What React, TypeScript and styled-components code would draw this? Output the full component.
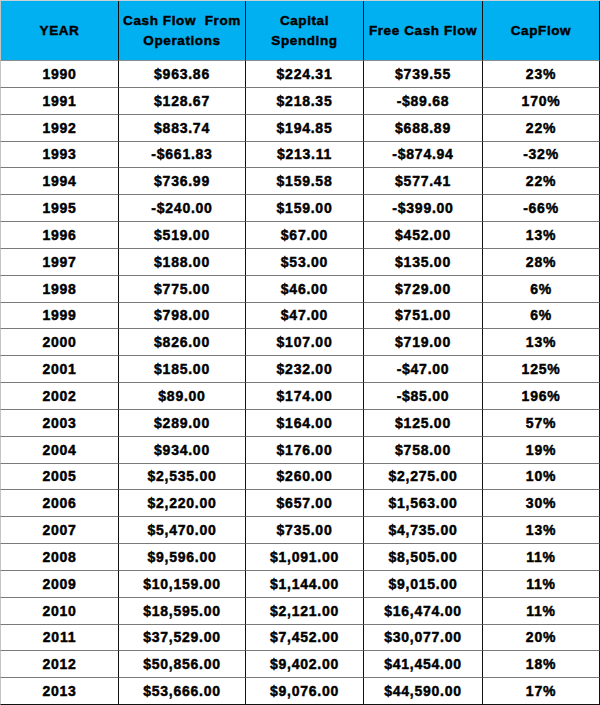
import React from "react";
import styled, { createGlobalStyle } from "styled-components";

const Global = createGlobalStyle`
  html, body { margin: 0; padding: 0; background: #ffffff; }
  body { font-family: "Liberation Sans", Arial, sans-serif; }
`;

const Grid = styled.div`
  display: grid;
  width: 600px;
  height: 705px;
  grid-template-columns: 119px 127px 118px 119px 117px;
  grid-template-rows: 60px repeat(24, 1fr);
  box-sizing: border-box;
  border-top: 1px solid #c8d0d4;
`;

const Cell = styled.div<{ $head?: boolean; $first?: boolean }>`
  box-sizing: border-box;
  display: flex;
  align-items: center;
  justify-content: center;
  text-align: center;
  border-right: 1px solid #111;
  border-bottom: 1px solid ${(p) => (p.$head ? "#8a8f92" : "#7a7a7a")};
  border-left: ${(p) => (p.$first ? "1px solid #c4c4c4" : "none")};
  background: ${(p) => (p.$head ? "#00b0f0" : "#ffffff")};
  color: #000;
  font-weight: 700;
  font-size: ${(p) => (p.$head ? "13.5px" : "14px")};
  letter-spacing: ${(p) => (p.$head ? "0.6px" : "0.75px")};
  line-height: ${(p) => (p.$head ? "20px" : "1")};
  -webkit-text-stroke: 0.45px #000;
  white-space: pre;
`;

const LastRowCell = styled(Cell)`
  border-bottom: 1px solid #111;
`;

const headers = ["YEAR", "Cash Flow  From\nOperations", "Capital\nSpending", "Free Cash Flow", "CapFlow"];

const rows: string[][] = [
  ["1990", "$963.86", "$224.31", "$739.55", "23%"],
  ["1991", "$128.67", "$218.35", "-$89.68", "170%"],
  ["1992", "$883.74", "$194.85", "$688.89", "22%"],
  ["1993", "-$661.83", "$213.11", "-$874.94", "-32%"],
  ["1994", "$736.99", "$159.58", "$577.41", "22%"],
  ["1995", "-$240.00", "$159.00", "-$399.00", "-66%"],
  ["1996", "$519.00", "$67.00", "$452.00", "13%"],
  ["1997", "$188.00", "$53.00", "$135.00", "28%"],
  ["1998", "$775.00", "$46.00", "$729.00", "6%"],
  ["1999", "$798.00", "$47.00", "$751.00", "6%"],
  ["2000", "$826.00", "$107.00", "$719.00", "13%"],
  ["2001", "$185.00", "$232.00", "-$47.00", "125%"],
  ["2002", "$89.00", "$174.00", "-$85.00", "196%"],
  ["2003", "$289.00", "$164.00", "$125.00", "57%"],
  ["2004", "$934.00", "$176.00", "$758.00", "19%"],
  ["2005", "$2,535.00", "$260.00", "$2,275.00", "10%"],
  ["2006", "$2,220.00", "$657.00", "$1,563.00", "30%"],
  ["2007", "$5,470.00", "$735.00", "$4,735.00", "13%"],
  ["2008", "$9,596.00", "$1,091.00", "$8,505.00", "11%"],
  ["2009", "$10,159.00", "$1,144.00", "$9,015.00", "11%"],
  ["2010", "$18,595.00", "$2,121.00", "$16,474.00", "11%"],
  ["2011", "$37,529.00", "$7,452.00", "$30,077.00", "20%"],
  ["2012", "$50,856.00", "$9,402.00", "$41,454.00", "18%"],
  ["2013", "$53,666.00", "$9,076.00", "$44,590.00", "17%"],
];

export default function App() {
  return (
    <>
      <Global />
      <Grid>
        {headers.map((h, i) => (
          <Cell key={"h" + i} $head $first={i === 0}>
            {h}
          </Cell>
        ))}
        {rows.map((r, ri) =>
          r.map((v, ci) => {
            const C = ri === rows.length - 1 ? LastRowCell : Cell;
            return (
              <C key={ri + "-" + ci} $first={ci === 0}>
                {v}
              </C>
            );
          })
        )}
      </Grid>
    </>
  );
}
